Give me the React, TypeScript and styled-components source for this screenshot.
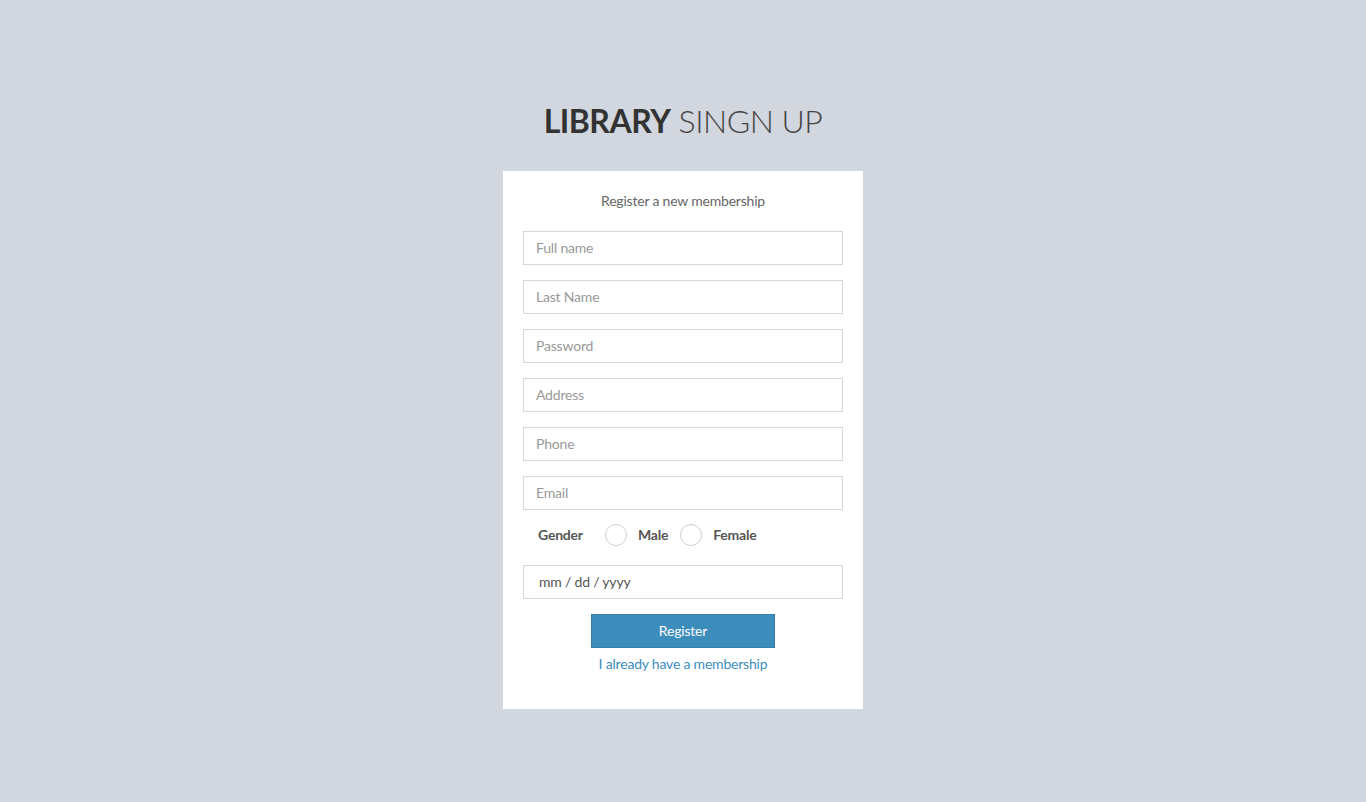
import React from "react";
import styled, { createGlobalStyle } from "styled-components";

const Global = createGlobalStyle`
  html, body { margin: 0; padding: 0; }
  body {
    background: #d2d6de;
    font-family: "Lato", "Liberation Sans", sans-serif;
    font-size: 14px;
    line-height: 1.42857;
    letter-spacing: -0.2px;
    color: #333;
  }
  * { box-sizing: border-box; }
`;

const Page = styled.div`
  min-height: 802px;
  padding-top: 96px;
`;

const RegisterBox = styled.div`
  width: 360px;
  margin: 0 auto;
`;

const Logo = styled.div`
  font-size: 32px;
  letter-spacing: -0.5px;
  line-height: 50px;
  height: 50px;
  text-align: center;
  margin-bottom: 25px;
  color: #444;
  font-weight: 300;
  b { font-weight: 700; color: #333; }
`;

const Body = styled.div`
  background: #fff;
  padding: 20px 20px 35px;
`;

const Msg = styled.p`
  margin: 0;
  text-align: center;
  padding: 0 20px 20px;
  color: #666;
  line-height: 20px;
`;

const Group = styled.div<{ $mb?: number }>`
  margin-bottom: ${(p) => (p.$mb ?? 15)}px;
`;

const Input = styled.input`
  display: block;
  width: 100%;
  height: 34px;
  padding: 5px 12px 7px;
  border: 1px solid #d2d6de;
  border-radius: 0;
  font: inherit;
  font-size: 14px;
  letter-spacing: -0.2px;
  color: #555;
  outline: none;
  &::placeholder { color: #999; }
`;

const DateField = styled.div`
  height: 34px;
  border: 1px solid #d2d6de;
  padding: 6px 15px;
  color: #555;
  font-size: 14px;
  line-height: 20px;
`;

const GenderRow = styled.div`
  display: flex;
  align-items: center;
  height: 40px;
  padding-left: 15px;
  margin-top: -10px;
  margin-bottom: 10px;
`;

const Label = styled.span<{ $ml?: number }>`
  font-weight: 700;
  color: #555;
  margin-left: ${(p) => p.$ml ?? 0}px;
`;

const Radio = styled.span<{ $ml: number }>`
  display: inline-block;
  width: 22px;
  height: 22px;
  border-radius: 50%;
  border: 1px solid #cfcfcf;
  background: #fff;
  margin-left: ${(p) => p.$ml}px;
`;

const Button = styled.button`
  display: block;
  margin: 0 auto;
  width: 184px;
  height: 34px;
  background: #3c8dbc;
  border: 1px solid #367fa9;
  color: #fff;
  font: inherit;
  font-size: 14px;
  letter-spacing: -0.2px;
  border-radius: 0;
`;

const LinkLine = styled.div`
  text-align: center;
  margin-top: 6px;
  line-height: 20px;
  a { color: #3c8dbc; text-decoration: none; }
`;

export default function App() {
  const fields = ["Full name", "Last Name", "Password", "Address", "Phone", "Email"];
  return (
    <Page>
      <Global />
      <RegisterBox>
        <Logo>
          <b>LIBRARY</b> SINGN UP
        </Logo>
        <Body>
          <Msg>Register a new membership</Msg>
          {fields.map((f) => (
            <Group key={f}>
              <Input type={f === "Password" ? "password" : "text"} placeholder={f} />
            </Group>
          ))}
          <GenderRow>
            <Label>Gender</Label>
            <Radio $ml={22} />
            <Label $ml={11}>Male</Label>
            <Radio $ml={12} />
            <Label $ml={11}>Female</Label>
          </GenderRow>
          <Group>
            <DateField>mm / dd / yyyy</DateField>
          </Group>
          <Button>Register</Button>
          <LinkLine>
            <a href="#">I already have a membership</a>
          </LinkLine>
        </Body>
      </RegisterBox>
    </Page>
  );
}
